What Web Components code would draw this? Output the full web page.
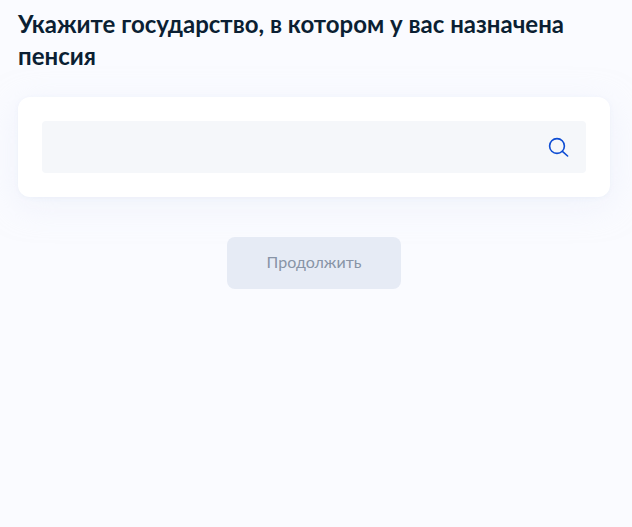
<!DOCTYPE html>
<html lang="ru">
<head>
<meta charset="utf-8">
<title>Пенсия</title>
<style>
  html, body { margin: 0; height: 100%; }
  body { background: #fafbff; font-family: Lato, "Noto Sans", sans-serif; }
</style>
</head>
<body>
<pension-page>
  <page-title>Укажите государство, в котором у вас назначена пенсия</page-title>
  <search-card></search-card>
  <continue-button>Продолжить</continue-button>
</pension-page>
<script>
class PensionPage extends HTMLElement {
  constructor() {
    super();
    this.attachShadow({ mode: 'open' }).innerHTML = `
      <style>
        :host { display: flex; flex-direction: column; padding: 8px 22px 0 18px; box-sizing: border-box; width: 632px; height: 527px; }
      </style>
      <slot></slot>
    `;
  }
}

class PageTitle extends HTMLElement {
  constructor() {
    super();
    this.attachShadow({ mode: 'open' }).innerHTML = `
      <style>
        :host { display: block; margin-bottom: 25px; }
        h1 { margin: 0; font: 700 24px/32px Lato, "Noto Sans", sans-serif; color: #0b1f33; }
      </style>
      <h1><slot></slot></h1>
    `;
  }
}

class SearchCard extends HTMLElement {
  constructor() {
    super();
    this.attachShadow({ mode: 'open' }).innerHTML = `
      <style>
        :host { display: block; background: #fff; border-radius: 12px; padding: 24px; box-shadow: 0 1px 4px rgba(231,236,248,.6), 0 8px 32px rgba(231,236,248,.5); }
        .field { display: flex; align-items: center; justify-content: flex-end; height: 52px; padding-right: 16px; background: #f5f7fa; border-radius: 4px; }
        svg { display: block; width: 24px; height: 24px; }
      </style>
      <div class="field">
        <svg viewBox="0 0 24 24" fill="none" stroke="#0d4cd3" stroke-width="1.6">
          <circle cx="11" cy="11" r="7.4"/>
          <path d="M16.4 16.4 L21.6 21" stroke-linecap="round"/>
        </svg>
      </div>
    `;
  }
}

class ContinueButton extends HTMLElement {
  constructor() {
    super();
    this.attachShadow({ mode: 'open' }).innerHTML = `
      <style>
        :host { display: flex; justify-content: center; margin-top: 40px; }
        button { width: 174px; height: 52px; border: 0; border-radius: 8px; padding: 0 0 2px; background: #e6ebf5; color: #8894a6; font: 400 16px/24px Lato, "Noto Sans", sans-serif; }
      </style>
      <button disabled><slot></slot></button>
    `;
  }
}

customElements.define('pension-page', PensionPage);
customElements.define('page-title', PageTitle);
customElements.define('search-card', SearchCard);
customElements.define('continue-button', ContinueButton);
</script>
</body>
</html>
